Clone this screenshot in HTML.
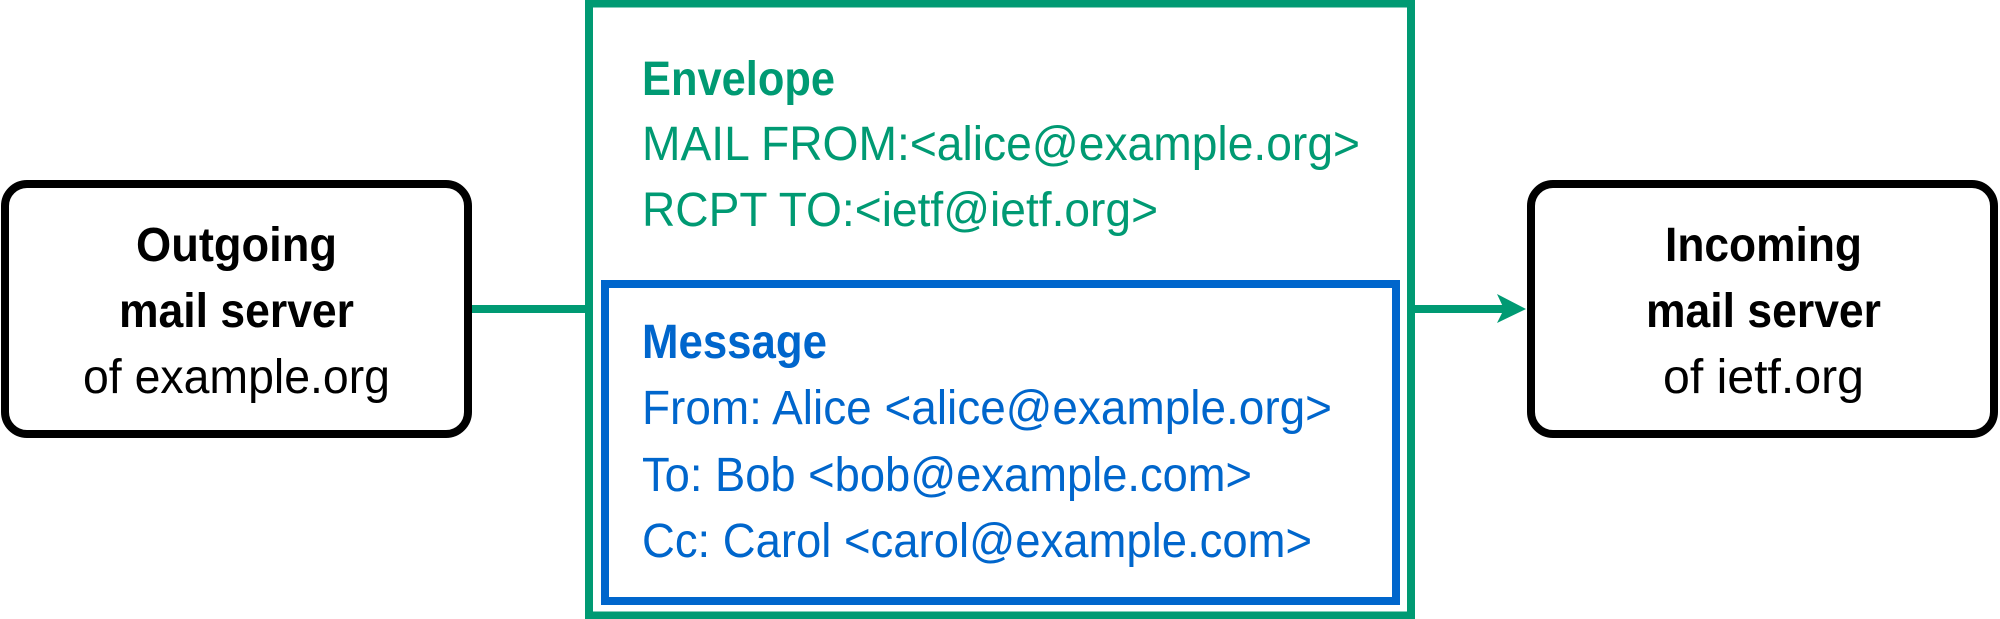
<!DOCTYPE html>
<html><head><meta charset="utf-8"><style>html,body{margin:0;padding:0;background:#fff}svg{display:block}</style></head>
<body>
<svg width="2000" height="619" viewBox="0 0 2000 619" xmlns="http://www.w3.org/2000/svg" font-family="Liberation Sans, sans-serif">
<rect x="0" y="0" width="2000" height="619" fill="#fff"/>
<!-- connector lines -->
<line x1="468" y1="309" x2="589" y2="309" stroke="#009a73" stroke-width="8"/>
<line x1="1411" y1="309" x2="1505" y2="309" stroke="#009a73" stroke-width="8"/>
<path d="M1497,294 L1526,309 L1497,323 L1504,309 Z" fill="#009a73"/>
<!-- green envelope -->
<rect x="589" y="3.5" width="822" height="612" fill="none" stroke="#009a73" stroke-width="8"/>
<!-- blue message -->
<rect x="605" y="284" width="791" height="317" fill="none" stroke="#0066cc" stroke-width="8"/>
<!-- boxes -->
<rect x="5" y="184" width="463" height="250" rx="22" fill="none" stroke="#000" stroke-width="8"/>
<rect x="1531" y="184" width="463" height="250" rx="22" fill="none" stroke="#000" stroke-width="8"/>

<g fill="#009a73" font-size="48">
<text x="642" y="95" font-weight="bold" textLength="193" lengthAdjust="spacingAndGlyphs">Envelope</text>
<text x="642" y="160" textLength="718" lengthAdjust="spacingAndGlyphs">MAIL FROM:&lt;alice@example.org&gt;</text>
<text x="642" y="226" textLength="516" lengthAdjust="spacingAndGlyphs">RCPT TO:&lt;ietf@ietf.org&gt;</text>
</g>
<g fill="#0066cc" font-size="48">
<text x="642" y="358" font-weight="bold" textLength="185" lengthAdjust="spacingAndGlyphs">Message</text>
<text x="642" y="424" textLength="690" lengthAdjust="spacingAndGlyphs">From: Alice &lt;alice@example.org&gt;</text>
<text x="642" y="491" textLength="610" lengthAdjust="spacingAndGlyphs">To: Bob &lt;bob@example.com&gt;</text>
<text x="642" y="557" textLength="670" lengthAdjust="spacingAndGlyphs">Cc: Carol &lt;carol@example.com&gt;</text>
</g>
<g fill="#000" font-size="48">
<text x="136" y="261" font-weight="bold" textLength="201" lengthAdjust="spacingAndGlyphs">Outgoing</text>
<text x="119" y="327" font-weight="bold" textLength="235" lengthAdjust="spacingAndGlyphs">mail server</text>
<text x="83" y="393" textLength="307" lengthAdjust="spacingAndGlyphs">of example.org</text>
<text x="1665" y="261" font-weight="bold" textLength="197" lengthAdjust="spacingAndGlyphs">Incoming</text>
<text x="1646" y="327" font-weight="bold" textLength="235" lengthAdjust="spacingAndGlyphs">mail server</text>
<text x="1663" y="393" textLength="201" lengthAdjust="spacingAndGlyphs">of ietf.org</text>
</g>
</svg>
</body></html>
